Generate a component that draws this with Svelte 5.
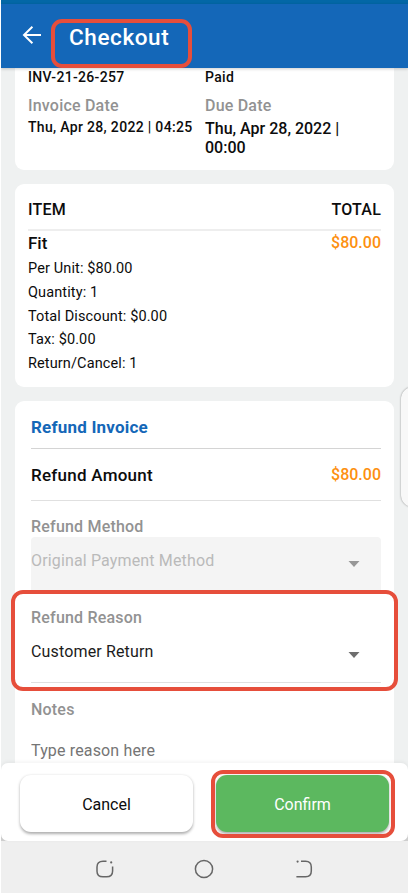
<script>
	const details = [
		"Per Unit: $80.00",
		"Quantity: 1",
		"Total Discount: $0.00",
		"Tax: $0.00",
		"Return/Cancel: 1"
	];

	let refundMethod = "Original Payment Method";
	let refundReason = "Customer Return";
	let notes = "";
</script>

<div class="screen">
	<div class="status-strip"></div>
	<header class="app-bar">
		<svg class="back" width="20" height="20" viewBox="0 0 20 20">
			<path d="M19 10H2M10.4 1.8L2 10l8.4 8.2" fill="none" stroke="#fff" stroke-width="2" />
		</svg>
		<h1>Checkout</h1>
		<span class="highlight highlight-title"></span>
	</header>

	<main class="content">
		<section class="card invoice">
			<div class="col">
				<p class="value small first">INV-21-26-257</p>
				<p class="label">Invoice Date</p>
				<p class="value small date">Thu, Apr 28, 2022 | 04:25</p>
			</div>
			<div class="col">
				<p class="value small first paid">Paid</p>
				<p class="label">Due Date</p>
				<p class="value due">Thu, Apr 28, 2022 | 00:00</p>
			</div>
		</section>

		<section class="card items">
			<div class="row items-head">
				<span>ITEM</span>
				<span class="total">TOTAL</span>
			</div>
			<div class="row item-name">
				<span>Fit</span>
				<span class="price">$80.00</span>
			</div>
			{#each details as line}
				<p class="detail">{line}</p>
			{/each}
		</section>

		<section class="card refund">
			<h2>Refund Invoice</h2>
			<div class="row amount">
				<span>Refund Amount</span>
				<span class="price">$80.00</span>
			</div>

			<p class="field-label">Refund Method</p>
			<div class="select disabled">
				<span class="method">{refundMethod}</span>
				<svg class="caret" width="12" height="6" viewBox="0 0 12 6"><path d="M0.5 0h11L6 6z" /></svg>
			</div>

			<div class="reason-group">
				<p class="field-label">Refund Reason</p>
				<div class="select">
					<span class="reason">{refundReason}</span>
					<svg class="caret" width="12" height="6" viewBox="0 0 12 6"><path d="M0.5 0h11L6 6z" /></svg>
				</div>
				<span class="highlight highlight-reason"></span>
			</div>

			<p class="field-label notes-label">Notes</p>
			<input class="notes" placeholder="Type reason here" bind:value={notes} />
		</section>
		<div class="edge-handle"></div>
	</main>

	<footer class="actions">
		<div class="actions-inner">
			<button class="btn cancel">Cancel</button>
			<div class="confirm-wrap">
				<button class="btn confirm">Confirm</button>
				<span class="highlight highlight-confirm"></span>
			</div>
		</div>
	</footer>

	<nav class="system-nav">
		<svg width="20" height="20" viewBox="0 0 20 20">
			<path d="M11.5 2.2H8Q2 2.2 2 8v4.2Q2 17.8 8 17.8h3.6Q17.6 17.8 17.6 12V7.5" />
			<circle class="dot" cx="16.2" cy="3.4" r="1.1" />
		</svg>
		<svg width="20" height="20" viewBox="0 0 20 20">
			<circle cx="10" cy="10" r="8.6" />
		</svg>
		<svg width="20" height="20" viewBox="0 0 20 20">
			<path d="M7 2.2h4.6Q17.3 2.2 17.3 8v4Q17.3 17.7 11.6 17.7H2.4" />
			<circle class="dot" cx="3.6" cy="2.6" r="1.1" />
		</svg>
	</nav>
</div>

<style>
	:global(body) {
		background: #fff;
		overflow: hidden;
	}

	.screen {
		display: flex;
		flex-direction: column;
		width: 407px;
		height: 893px;
		margin-left: 1px;
		overflow: hidden;
		background: #eff1f1;
		font-family: Roboto, "Liberation Sans", sans-serif;
		color: #0c0c0c;
	}

	p,
	h1,
	h2 {
		margin: 0;
	}

	/* Header */
	.status-strip {
		height: 4px;
		flex: none;
		background: #0367a6;
	}

	.app-bar {
		position: relative;
		z-index: 2;
		display: flex;
		flex: none;
		align-items: center;
		box-sizing: border-box;
		height: 64px;
		padding: 0 21px;
		background: #1467b8;
		box-shadow: 0 1px 3px rgba(0, 0, 0, 0.2);
	}

	.back {
		margin-bottom: 2px;
	}

	h1 {
		margin: 1px 0 0 27px;
		font-size: 22.5px;
		line-height: 28px;
		font-weight: 500;
		letter-spacing: 0.6px;
		color: #fff;
	}

	/* Red callout frames */
	.highlight {
		position: absolute;
		box-sizing: border-box;
		border: 4px solid #e64e3b;
		border-radius: 12px;
		pointer-events: none;
	}

	.highlight-title {
		left: 50px;
		top: 15px;
		width: 141px;
		height: 49px;
		border-radius: 11px;
	}

	.highlight-reason {
		left: -20px;
		top: -2px;
		width: 387px;
		height: 101px;
	}

	.highlight-confirm {
		left: -5px;
		top: -5px;
		width: 184px;
		height: 68px;
	}

	/* Cards */
	.content {
		position: relative;
		display: flex;
		flex: none;
		flex-direction: column;
		gap: 14px;
		height: 695px;
		padding: 0 14px;
	}

	.card {
		box-sizing: border-box;
		width: 379px;
		flex: none;
		padding: 0 13px;
		border-radius: 9px;
		background: #fff;
	}

	.row {
		display: flex;
		justify-content: space-between;
	}

	.price {
		font-weight: 500;
		color: #fd900f;
		letter-spacing: 0;
	}

	.invoice {
		display: grid;
		grid-template-columns: 177px 1fr;
		height: 102px;
		border-radius: 0 0 9px 9px;
	}

	.value {
		font-size: 16px;
		line-height: 19px;
		font-weight: 500;
	}

	.value.small {
		font-size: 14px;
		letter-spacing: 0.32px;
		white-space: nowrap;
	}

	.value.first {
		line-height: 18px;
	}

	.label {
		margin: 11px 0 3px;
		font-size: 16px;
		line-height: 18px;
		font-weight: 500;
		letter-spacing: 0.2px;
		color: #929292;
	}

	.due {
		width: 145px;
		padding-top: 1px;
	}

	.items {
		height: 203px;
		padding-top: 14px;
	}

	.items-head {
		padding-bottom: 7px;
		border-bottom: 2px solid #eee;
		font-size: 16px;
		line-height: 24px;
		font-weight: 500;
		letter-spacing: 0.2px;
	}

	.item-name {
		font-size: 17px;
		line-height: 25px;
		font-weight: 500;
	}

	.item-name .price {
		font-size: 16px;
		line-height: 23px;
	}

	.detail {
		position: relative;
		top: 1px;
		font-size: 14.5px;
		line-height: 23.8px;
		letter-spacing: 0.12px;
	}

	.refund {
		height: 362px;
		padding: 6px 13px 0 16px;
		border-radius: 9px 9px 0 0;
	}

	h2 {
		border-bottom: 1px solid #d4d4d4;
		font-size: 17px;
		line-height: 41px;
		font-weight: 700;
		letter-spacing: 0.2px;
		color: #1467b8;
	}

	.amount {
		padding-top: 1px;
		border-bottom: 1px solid #e0e0e0;
		font-size: 17px;
		line-height: 50px;
		font-weight: 500;
		letter-spacing: 0.25px;
	}

	.amount .price {
		font-size: 16px;
		letter-spacing: 0;
	}

	.field-label {
		padding-top: 15px;
		font-size: 16px;
		line-height: 21px;
		font-weight: 500;
		letter-spacing: 0.2px;
		color: #929292;
	}

	.select {
		display: flex;
		justify-content: space-between;
		box-sizing: border-box;
		height: 55px;
		padding-right: 21px;
		border-bottom: 1px solid #e0e0e0;
		font-size: 16px;
		line-height: 47px;
		letter-spacing: 0.15px;
		color: #1c1c1c;
	}

	.select.disabled {
		border-bottom: 0;
		border-radius: 4px 4px 0 0;
		background: #f4f4f4;
		color: #bababa;
	}

	.caret {
		margin-top: 24px;
		fill: #6e6e6e;
	}

	.disabled .caret {
		fill: #979797;
	}

	.reason-group {
		position: relative;
	}

	.notes-label {
		padding-top: 16px;
	}

	.notes {
		display: block;
		box-sizing: border-box;
		width: 100%;
		height: 40px;
		margin-top: 10px;
		padding: 0;
		border: 0;
		outline: 0;
		background: none;
		font: 16px Roboto, sans-serif;
		letter-spacing: 0.15px;
		color: #1c1c1c;
	}

	.notes::placeholder {
		color: #757575;
		opacity: 1;
	}

	/* Side panel handle peeking in from the right edge */
	.edge-handle {
		position: absolute;
		left: 400px;
		top: 319px;
		width: 24px;
		height: 120px;
		border-radius: 12px;
		background: #f8f8f8;
		box-shadow: 0 0 2px rgba(0, 0, 0, 0.45);
	}

	/* Bottom buttons */
	.actions {
		position: relative;
		z-index: 1;
		flex: none;
		height: 78px;
		background: linear-gradient(#eff1f1 50%, #cfcfcf 50%);
	}

	.actions-inner {
		display: flex;
		gap: 23px;
		box-sizing: border-box;
		height: 78px;
		padding: 12px 19px 9px;
		border-radius: 7px;
		background: #fff;
		box-shadow: 0 -1px 4px rgba(0, 0, 0, 0.06);
	}

	.btn {
		display: block;
		width: 173px;
		height: 57px;
		padding: 2px 0 0;
		border: 0;
		border-radius: 11px;
		font: 16px Roboto, sans-serif;
		background: #fff;
		color: #0c0c0c;
		box-shadow: 0 1.5px 3px rgba(0, 0, 0, 0.32);
	}

	.confirm-wrap {
		position: relative;
	}

	.confirm {
		background: #5cb85f;
		color: #fff;
	}

	.system-nav {
		display: flex;
		flex: none;
		justify-content: center;
		gap: 79.5px;
		box-sizing: border-box;
		height: 52px;
		padding: 18px 1px 0 0;
		background: #efefef;
	}

	.system-nav svg {
		fill: none;
		stroke: #666;
		stroke-width: 1.5;
	}

	.system-nav .dot {
		fill: #666;
		stroke: none;
	}
</style>
